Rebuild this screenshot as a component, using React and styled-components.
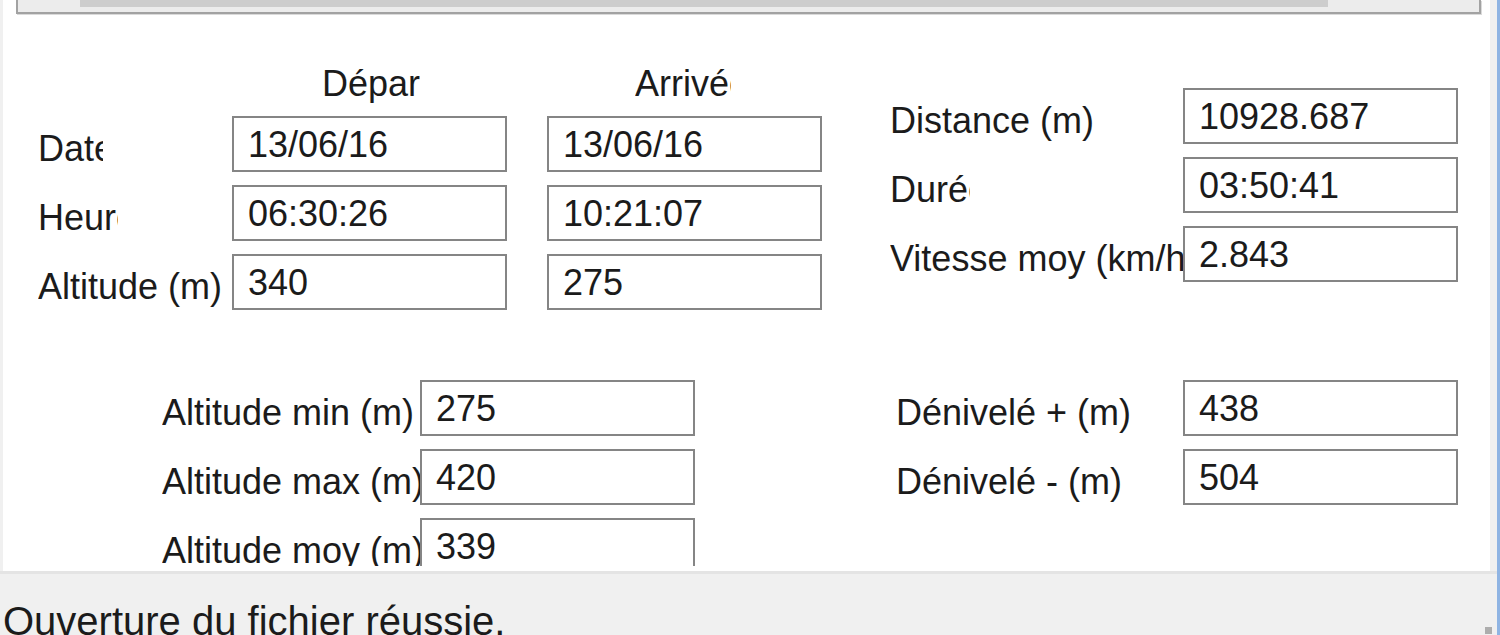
import React from 'react';
import styled, { createGlobalStyle } from 'styled-components';

const GlobalStyle = createGlobalStyle`
  html, body {
    margin: 0;
    padding: 0;
    background: #f0f0f0;
    overflow: hidden;
  }
  body {
    font-family: "Liberation Sans", Arial, sans-serif;
    color: #1b1b1b;
  }
`;

const Window = styled.div`
  width: 1500px;
  height: 635px;
  box-sizing: border-box;
  display: flex;
  flex-direction: column;
  background: #f0f0f0;
  border-right: 3px solid #8fb4e3;
  overflow: hidden;
`;

const Panel = styled.div`
  margin-left: 3px;
  width: 1487px;
  height: 571px;
  flex-shrink: 0;
  box-sizing: border-box;
  padding-bottom: 5px;
  background: #ffffff;
  display: flex;
  flex-direction: column;
`;

const Content = styled.div`
  flex: 1;
  overflow: hidden;
  display: flex;
  flex-direction: column;
`;

const ScrollStrip = styled.div`
  margin-left: 13px;
  width: 1465px;
  height: 14px;
  flex-shrink: 0;
  box-sizing: border-box;
  border: 2px solid #a2a2a2;
  border-top: none;
  background: #ececec;
  box-shadow: 1px 1px 0 #dadada;
  display: flex;
  align-items: flex-start;
`;

const Thumb = styled.div`
  margin-left: 62px;
  width: 1248px;
  height: 7px;
  background: #cdcdcd;
`;

const Section = styled.div`
  display: flex;
  align-items: flex-start;
  flex-shrink: 0;
  padding-left: ${(p) => p.$indent}px;
  margin-top: ${(p) => p.$top || 0}px;
`;

const Group = styled.div`
  display: grid;
  grid-template-columns: ${(p) => p.$cols};
  grid-template-rows: ${(p) => p.$rows || 'none'};
  grid-auto-rows: 56px;
  row-gap: 13px;
  margin-left: ${(p) => p.$left || 0}px;
  padding-top: ${(p) => p.$top || 0}px;
`;

const Corner = styled.div`
  grid-column: 1;
  grid-row: 1;
`;

const Header = styled.div`
  grid-column: ${(p) => p.$col};
  grid-row: 1;
  margin-left: ${(p) => p.$offset}px;
  width: ${(p) => p.$clip}px;
  font-size: 36px;
  line-height: 38px;
  white-space: nowrap;
  overflow: hidden;
`;

const Label = styled.div`
  grid-column: 1;
  font-size: 36px;
  line-height: 42px;
  padding-top: 12px;
  white-space: nowrap;
  overflow: hidden;
  max-width: ${(p) => (p.$clip ? `${p.$clip}px` : '100%')};
`;

const TextBox = styled.input`
  grid-column: ${(p) => p.$col || 'auto'};
  width: 275px;
  height: 56px;
  box-sizing: border-box;
  margin: 0;
  padding: 2px 0 0 14px;
  border: 2px solid #858585;
  border-radius: 0;
  background: #ffffff;
  font-family: "Liberation Sans", Arial, sans-serif;
  font-size: 36px;
  color: #1b1b1b;
  outline: none;
`;

const StatusBar = styled.div`
  position: relative;
  flex: 1;
  border-top: 3px solid #e4e4e4;
  padding: 24px 0 0 3px;
  font-size: 40px;
  line-height: 46px;
  white-space: nowrap;
  color: #1b1b1b;
`;

const Grip = styled.div`
  position: absolute;
  right: 5px;
  bottom: -14px;
  display: grid;
  grid-template-columns: repeat(3, 7px);
  grid-auto-rows: 7px;
  gap: 5px;
`;

const Dot = styled.span`
  background: ${(p) => (p.$on ? '#adadad' : 'transparent')};
`;

const Field = ({ label, value, clip }) => (
  <>
    <Label $clip={clip}>{label}</Label>
    <TextBox $col={2} readOnly value={value} />
  </>
);

const trip = [
  { label: 'Date', clip: 65, start: '13/06/16', end: '13/06/16' },
  { label: 'Heure', clip: 80, start: '06:30:26', end: '10:21:07' },
  { label: 'Altitude (m)', start: '340', end: '275' },
];

const totals = [
  { label: 'Distance (m)', value: '10928.687' },
  { label: 'Durée', clip: 80, value: '03:50:41' },
  { label: 'Vitesse moy (km/h)', value: '2.843' },
];

const altitudes = [
  { label: 'Altitude min (m)', value: '275' },
  { label: 'Altitude max (m)', value: '420' },
  { label: 'Altitude moy (m)', value: '339' },
];

const climbs = [
  { label: 'Dénivelé + (m)', value: '438' },
  { label: 'Dénivelé - (m)', value: '504' },
];

const grip = [0, 0, 1, 0, 1, 1, 1, 1, 1];

export default function App() {
  return (
    <>
      <GlobalStyle />
      <Window>
        <Panel>
          <Content>
            <ScrollStrip>
              <Thumb />
            </ScrollStrip>

            <Section $indent={35}>
              <Group $cols="194px 275px 40px 275px" $rows="38px" $top={51}>
                <Corner />
                <Header $col={2} $offset={90} $clip={98}>Départ</Header>
                <Header $col={4} $offset={88} $clip={96}>Arrivée</Header>
                {trip.map((row) => (
                  <React.Fragment key={row.label}>
                    <Label $clip={row.clip}>{row.label}</Label>
                    <TextBox $col={2} readOnly value={row.start} />
                    <TextBox $col={4} readOnly value={row.end} />
                  </React.Fragment>
                ))}
              </Group>

              <Group $cols="293px 275px" $left={68} $top={74}>
                {totals.map((row) => (
                  <Field key={row.label} {...row} />
                ))}
              </Group>
            </Section>

            <Section $indent={159} $top={70}>
              <Group $cols="258px 275px">
                {altitudes.map((row) => (
                  <Field key={row.label} {...row} />
                ))}
              </Group>
              <Group $cols="287px 275px" $left={201}>
                {climbs.map((row) => (
                  <Field key={row.label} {...row} />
                ))}
              </Group>
            </Section>
          </Content>
        </Panel>

        <StatusBar>
          Ouverture du fichier réussie.
          <Grip>
            {grip.map((on, i) => (
              <Dot key={i} $on={on} />
            ))}
          </Grip>
        </StatusBar>
      </Window>
    </>
  );
}
